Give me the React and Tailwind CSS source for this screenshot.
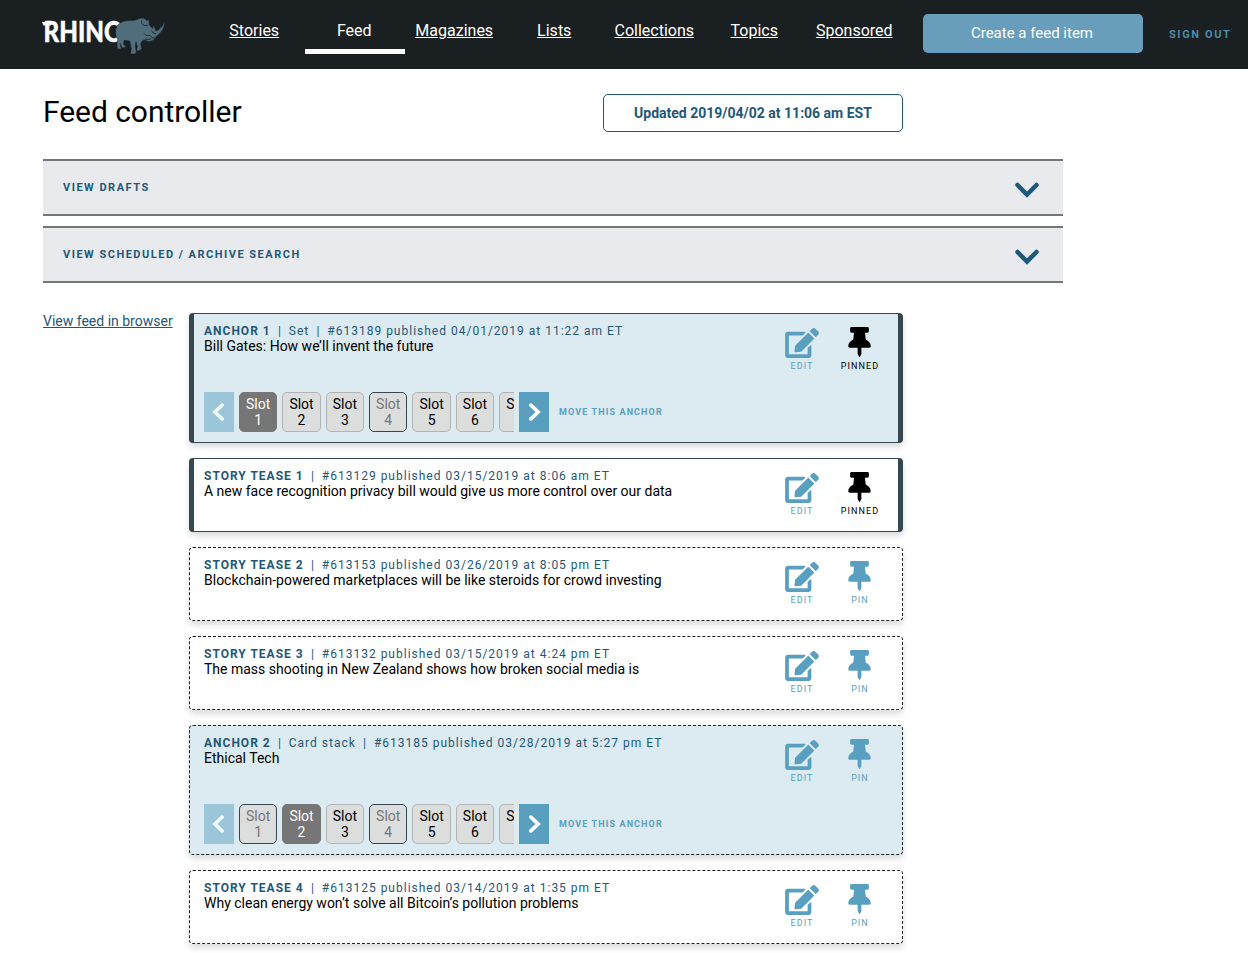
import React from 'react';
import { FaEdit, FaThumbtack } from 'react-icons/fa';

const NAV = ['Stories', 'Feed', 'Magazines', 'Lists', 'Collections', 'Topics', 'Sponsored'];

const ITEMS = [
  { title: 'ANCHOR 1', kind: 'Set', meta: '#613189 published 04/01/2019 at 11:22 am ET', text: 'Bill Gates: How we’ll invent the future', pinned: true, anchor: true, current: 1, taken: [4] },
  { title: 'STORY TEASE 1', meta: '#613129 published 03/15/2019 at 8:06 am ET', text: 'A new face recognition privacy bill would give us more control over our data', pinned: true },
  { title: 'STORY TEASE 2', meta: '#613153 published 03/26/2019 at 8:05 pm ET', text: 'Blockchain-powered marketplaces will be like steroids for crowd investing' },
  { title: 'STORY TEASE 3', meta: '#613132 published 03/15/2019 at 4:24 pm ET', text: 'The mass shooting in New Zealand shows how broken social media is' },
  { title: 'ANCHOR 2', kind: 'Card stack', meta: '#613185 published 03/28/2019 at 5:27 pm ET', text: 'Ethical Tech', anchor: true, current: 2, taken: [1, 4] },
  { title: 'STORY TEASE 4', meta: '#613125 published 03/14/2019 at 1:35 pm ET', text: 'Why clean energy won’t solve all Bitcoin’s pollution problems' },
];

function Logo() {
  return (
    <svg className="mt-[14px] ml-[41px] h-[42px] w-[126px] shrink-0" viewBox="0 0 126 42">
      <text x="2.500" y="27.800" fill="#fff" stroke="#fff" strokeWidth="0.400" fontFamily="Lato, sans-serif" fontWeight="900" fontSize="27.500" textLength="80" lengthAdjust="spacingAndGlyphs">RHINO</text>
      <path d="M1 8h9v3.500H2.500z" fill="#fff" />
      <g transform="translate(-11 -18) scale(.33333)">
        <path
          fill="#4f6d7a"
          stroke="#1a1f22"
          strokeWidth="1.500"
          d="M257 112C255 92 266 77 290 74C306 73 318 74 327 68C336 64 346 66 350 74L356 70L358 79C355 86 360 91 368 97L371 88L378 105C394 98 400 86 404 74C405 94 395 110 379 121C374 133 362 140 350 135C345 130 340 132 337 134L332 144L335 158L328 164H320L322 150L318 138L316 150L319 169L314 174H301L304 158L299 135L282 133L281 146L288 150L284 155H276L271 143V152L274 154L272 159H262L261 144L263 130C259 125 257 120 257 112Z"
        />
        <path d="M342 112C346 118 354 121 359 118L366 125L375 127M364 103L370 111L378 114M336 73C332 79 337 87 345 89L354 88M345 129L354 131L364 128" fill="none" stroke="#1a1f22" strokeWidth="2.500" />
      </g>
    </svg>
  );
}

function Chevron({ dir, className }) {
  const d = { down: 'M2.500 3l9.500 9.500L21.500 3', left: 'M12.500 2.500L3.500 11l9 8.500', right: 'M3.500 2.500l9 8.500-9 8.500' }[dir];
  return (
    <svg className={className} viewBox={dir === 'down' ? '0 0 24 16' : '0 0 16 22'} fill="none" stroke="currentColor" strokeWidth="4.500" strokeLinecap="round" strokeLinejoin="miter">
      <path d={d} />
    </svg>
  );
}

function Panel({ label }) {
  return (
    <button className="flex h-[57px] w-[1020px] items-center justify-between border-y-2 border-[#767676] bg-[#e8eaed] pr-6 pl-5 text-[11px] font-bold tracking-[1.5px] text-[#1e587a]">
      <span className="mt-[2px]">{label}</span>
      <Chevron dir="down" className="mt-[5px] h-4 w-6" />
    </button>
  );
}

function Slots({ current, taken }) {
  return (
    <div className="flex items-center">
      <button className="flex h-10 w-[30px] items-center justify-center bg-[#9bc5d9] pr-[2px] text-[#f0f7fa]">
        <Chevron dir="left" className="h-[18px] w-[13px]" />
      </button>
      <div className="mx-[5px] flex w-[275px] gap-[5px] overflow-hidden">
        {[1, 2, 3, 4, 5, 6, 7].map((n) => {
          const tone = n === current
            ? 'border-[#767676] bg-[#767676] text-white'
            : taken.includes(n)
              ? 'border-[#37474f] bg-[#dcdddd] text-[#767676]'
              : 'border-[#b3b3b3] bg-[#dcdddd] text-black';
          return (
            <button key={n} className={'h-10 w-[38.36px] shrink-0 rounded-[5px] border text-sm leading-4 ' + tone}>
              Slot<br />{n}
            </button>
          );
        })}
      </div>
      <button className="flex h-10 w-[30px] items-center justify-center bg-[#599fc0] text-white">
        <Chevron dir="right" className="h-[18px] w-[13px]" />
      </button>
      <a className="mt-px ml-[10px] text-[9px] font-bold tracking-[1.12px] text-[#599fc0]">MOVE THIS ANCHOR</a>
    </div>
  );
}

function Separator() {
  return <span className="tracking-[0.65px]">{'  |  '}</span>;
}

function Card({ item }) {
  const frame = item.pinned
    ? 'border-x-[5px] border-y border-solid border-[#37474f] pl-[10px] pr-[10px]'
    : 'border border-dashed border-[#1b2023] pl-[14px] pr-[14px]';
  const body = item.anchor ? 'h-[130px] bg-[#dceaf1]' : 'h-[74px] bg-white';
  return (
    <article className={'flex w-[714px] justify-between rounded-[4px] pt-[9px] pb-[10px] shadow-[0_4px_6px_rgba(0,0,0,0.14)] ' + frame + ' ' + body}>
      <div className="flex flex-col justify-between">
        <div>
          <p className="h-[15px] text-xs leading-4 tracking-[1px] whitespace-pre text-[#1e587a]">
            <b>{item.title}</b>
            {item.kind && <><Separator />{item.kind}</>}
            <Separator />
            {item.meta}
          </p>
          <h2 className="text-sm leading-4">{item.text}</h2>
        </div>
        {item.anchor && <Slots current={item.current} taken={item.taken} />}
      </div>
      <div className="flex pt-[5px] text-[9px] leading-[10px] tracking-[1.05px] text-[#599fc0]">
        <a className="flex w-[58px] flex-col items-center pr-px">
          <FaEdit className="h-[30px] w-[34px]" />
          <span className="mt-[3px] pl-px">EDIT</span>
        </a>
        <a className={'flex w-[57px] flex-col items-center ' + (item.pinned ? 'text-black' : '')}>
          <FaThumbtack className="-mt-px h-[30px] w-[23px]" />
          <span className="mt-[4px] pl-px">{item.pinned ? 'PINNED' : 'PIN'}</span>
        </a>
      </div>
    </article>
  );
}

export default function App() {
  return (
    <div className="h-[953px] w-[1248px] overflow-hidden bg-white font-[Roboto,sans-serif] text-black">
      <header className="flex h-[69px] bg-[#1a1f22]">
        <Logo />
        <nav className="ml-[38px] flex">
          {NAV.map((label) => (
            <a
              key={label}
              className={'flex h-[54px] w-[100px] shrink-0 justify-center border-b-[5px] pt-[19px] pr-[1.5px] text-base leading-6 text-white ' + (label === 'Feed' ? 'border-white' : 'border-transparent underline')}
            >
              {label}
            </a>
          ))}
        </nav>
        <button className="mt-[14px] ml-[18px] h-[39px] w-[220px] shrink-0 rounded-[5px] bg-[#699dbc] pr-[2px] pb-px text-[15px] text-white">
          Create a feed item
        </button>
        <a className="mt-[27px] ml-[26px] h-4 text-[11px] leading-4 font-bold tracking-[1.6px] whitespace-nowrap text-[#4b8bab]">SIGN OUT</a>
      </header>
      <main className="pl-[43px]">
        <div className="flex h-[90px] w-[860px] items-start justify-between pt-[25px]">
          <h1 className="text-[30px] leading-[35px] tracking-[-0.05px]">Feed controller</h1>
          <button className="h-[38px] w-[300px] rounded-[5px] border border-[#1e587a] text-sm font-bold text-[#1e587a]">
            Updated 2019/04/02 at 11:06 am EST
          </button>
        </div>
        <div className="flex flex-col gap-[10px]">
          <Panel label="VIEW DRAFTS" />
          <Panel label="VIEW SCHEDULED / ARCHIVE SEARCH" />
        </div>
        <div className="mt-[30px] flex">
          <a className="w-[146px] shrink-0 text-sm leading-4 text-[#1e587a] underline">View feed in browser</a>
          <div className="flex flex-col gap-[15px]">
            {ITEMS.map((item) => <Card key={item.title} item={item} />)}
          </div>
        </div>
      </main>
    </div>
  );
}
